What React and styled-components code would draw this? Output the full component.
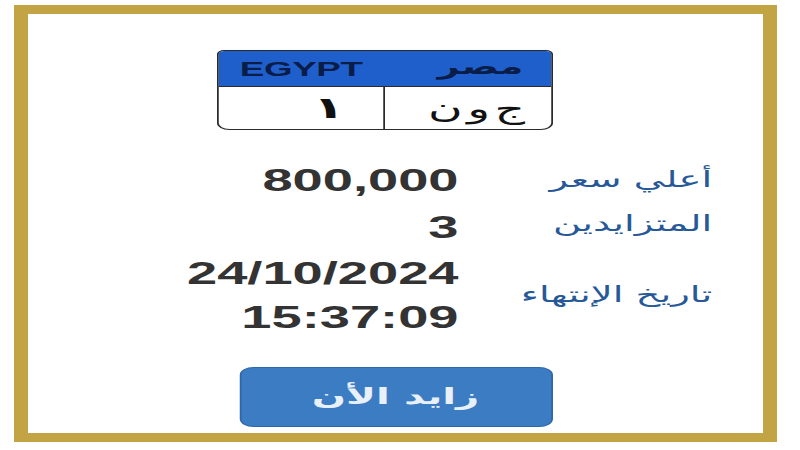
import React from "react";
import styled, { createGlobalStyle } from "styled-components";

const Global = createGlobalStyle`
  html, body { margin: 0; padding: 0; background: #ffffff; overflow: hidden; }
  body { font-family: "Liberation Sans", "DejaVu Sans", Arial, sans-serif; }
`;

/* The reference is a horizontally stretched picture: the card is laid out at its
   natural width and stretched by the same factor. */
const Stage = styled.div`
  width: 457px;
  height: 450px;
  padding: 5px 0 0 8px;
  box-sizing: border-box;
  transform: scaleX(1.75);
  transform-origin: 0 0;
`;

const Frame = styled.div`
  width: 436px;
  height: 437px;
  box-sizing: border-box;
  border-style: solid;
  border-width: 9px 8px;
  border-color: #c2a444;
  background: #ffffff;
  display: flex;
  flex-direction: column;
  align-items: center;
`;

const Plate = styled.div`
  margin-top: 36px;
  margin-right: 12px;
  width: 192px;
  height: 80px;
  box-sizing: border-box;
  border: 1.5px solid #2b2b2b;
  border-radius: 4px 4px 7px 7px;
  overflow: hidden;
  display: flex;
  flex-direction: column;
`;

const PlateHeader = styled.div`
  height: 35px;
  flex: none;
  background: #1f5fcc;
  border-bottom: 1.5px solid #2b2b2b;
  display: flex;
  align-items: center;
  justify-content: space-between;
  padding: 0 16px 0 12px;
  color: #0a1c48;
`;

const Egypt = styled.span`
  font-family: "Liberation Sans", Arial, sans-serif;
  font-weight: 700;
  font-size: 21px;
  letter-spacing: -0.2px;
`;

const Misr = styled.span`
  font-family: "DejaVu Sans", sans-serif;
  font-weight: 700;
  font-size: 22px;
  line-height: 1;
  margin-top: -4px;
`;

const PlateBody = styled.div`
  flex: 1;
  display: grid;
  grid-template-columns: 1fr 1fr;
`;

const PlateCell = styled.div`
  display: flex;
  align-items: center;
  justify-content: flex-end;
  padding-right: ${(p) => p.$pad}px;
  border-right: ${(p) => (p.$divider ? "1.5px solid #2b2b2b" : "none")};
  font-family: "DejaVu Sans", sans-serif;
  font-size: ${(p) => p.$size}px;
  font-weight: ${(p) => p.$weight};
  word-spacing: ${(p) => p.$wordSpacing || 0}px;
  color: #111111;
  line-height: 1;
`;

const Info = styled.div`
  margin-top: 28px;
  width: 100%;
  box-sizing: border-box;
  padding-right: 29px;
  direction: rtl;
  display: grid;
  grid-template-columns: 130px 1fr;
  column-gap: 15px;
  row-gap: 1px;
`;

const Label = styled.div`
  align-self: center;
  white-space: nowrap;
  font-family: "DejaVu Sans", sans-serif;
  font-size: 22px;
  color: #275897;
  margin-top: ${(p) => p.$shift || 0}px;
`;

const Value = styled.div`
  direction: ltr;
  text-align: right;
  font-family: "Liberation Sans", Arial, sans-serif;
  font-weight: 700;
  font-size: 31px;
  line-height: ${(p) => p.$lh}px;
  color: #333333;
`;

const BidButton = styled.button`
  margin-top: 27px;
  width: 179px;
  height: 60px;
  box-sizing: border-box;
  border: 1.5px solid #2d69aa;
  border-radius: 8px;
  background: #3b7cc3;
  color: #e8f0f9;
  font-family: "DejaVu Sans", sans-serif;
  font-weight: 700;
  font-size: 23px;
  padding: 0 0 2px 0;
  cursor: pointer;
`;

const rows = [
  { label: "أعلي سعر", value: ["800,000"], shift: -4 },
  { label: "المتزايدين", value: ["3"], shift: -10 },
  { label: "تاريخ الإنتهاء", value: ["24/10/2024", "15:37:09"], shift: -4 },
];

export default function App() {
  return (
    <>
      <Global />
      <Stage>
        <Frame>
          <Plate>
            <PlateHeader>
              <Egypt>EGYPT</Egypt>
              <Misr>مصر</Misr>
            </PlateHeader>
            <PlateBody>
              <PlateCell $divider $pad={22} $size={30} $weight={700}>
                ١
              </PlateCell>
              <PlateCell $pad={15} $size={27} $weight={400} $wordSpacing={-6}>
                ج و ن
              </PlateCell>
            </PlateBody>
          </Plate>
          <Info>
            {rows.map((r) => (
              <React.Fragment key={r.label}>
                <Label $shift={r.shift}>{r.label}</Label>
                <Value $lh={r.value.length > 1 ? 44 : 46}>
                  {r.value.map((v) => (
                    <div key={v}>{v}</div>
                  ))}
                </Value>
              </React.Fragment>
            ))}
          </Info>
          <BidButton>زايد الأن</BidButton>
        </Frame>
      </Stage>
    </>
  );
}
